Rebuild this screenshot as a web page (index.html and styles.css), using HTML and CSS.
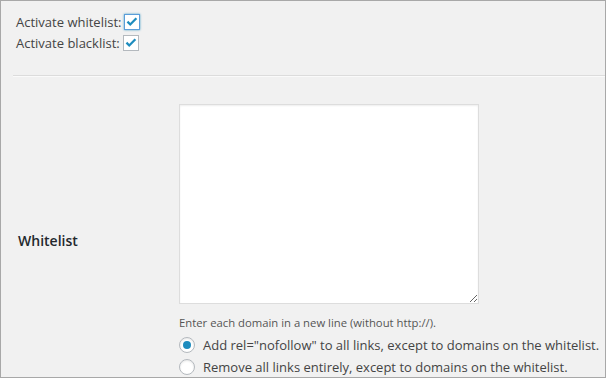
FILE: index.html
```html
<!DOCTYPE html>
<html lang="en">
<head>
    <meta charset="UTF-8">
    <title>Link settings</title>
    <link rel="stylesheet" href="styles.css">
</head>
<body>
    <div class="wrap">
        <div class="toggles">
            <div class="toggle">
                <span>Activate whitelist:</span>
                <span class="check focused">
                    <svg viewBox="0 0 16 16" width="15" height="15"><path d="M2.8 8.2l3.2 3.2L13 4.2" fill="none" stroke="#1e8cbe" stroke-width="2.6"/></svg>
                </span>
            </div>
            <div class="toggle">
                <span>Activate blacklist:</span>
                <span class="check">
                    <svg viewBox="0 0 16 16" width="15" height="15"><path d="M2.8 8.2l3.2 3.2L13 4.2" fill="none" stroke="#1e8cbe" stroke-width="2.6"/></svg>
                </span>
            </div>
        </div>

        <div class="divider"></div>

        <div class="form-row">
            <div class="row-label">Whitelist</div>
            <div class="row-field">
                <textarea class="domains"></textarea>
                <p class="description">Enter each domain in a new line (without http://).</p>
                <div class="option">
                    <span class="radio checked"></span>
                    <span>Add rel="nofollow" to all links, except to domains on the whitelist.</span>
                </div>
                <div class="option">
                    <span class="radio"></span>
                    <span>Remove all links entirely, except to domains on the whitelist.</span>
                </div>
            </div>
        </div>
    </div>
</body>
</html>
```

FILE: styles.css
```css
body {
    margin: 0;
    background-color: #fff;
    font-family: 'Open Sans', sans-serif;
}

.wrap {
    width: 604px;
    height: 376px;
    border: 1px solid #a8a8a8;
    background-color: #f1f1f1;
    color: #444;
    font-size: 13px;
    overflow: hidden;
}

.toggles {
    padding: 10px 15px 0;
}

.toggle {
    display: flex;
    align-items: center;
    gap: 3px;
    height: 21px;
    line-height: 18px;
}

.check {
    width: 14px;
    height: 14px;
    border: 1px solid #b4b9be;
    background-color: #fff;
    display: flex;
    align-items: center;
    justify-content: center;
}

.check.focused {
    border-color: #5b9dd9;
    box-shadow: 0 0 2px rgba(30, 140, 190, 0.8);
}

.divider {
    margin: 22px 0 0 12px;
    border-top: 1px solid #dcdcdc;
    border-bottom: 1px solid #fafafa;
}

.form-row {
    display: flex;
    align-items: center;
    margin-left: 12px;
    padding-top: 27px;
}

.row-label {
    width: 166px;
    padding-left: 5px;
    padding-bottom: 2px;
    box-sizing: border-box;
    color: #23282d;
    font-size: 14px;
    font-weight: 600;
}

.row-field {
    display: flex;
    flex-direction: column;
}

.domains {
    width: 300px;
    height: 200px;
    box-sizing: border-box;
    margin: 0;
    border: 1px solid #ddd;
    box-shadow: inset 0 1px 2px rgba(0, 0, 0, 0.07);
    background-color: #fff;
}

.description {
    margin: 10px 0 2px;
    font-size: 11.3px;
    line-height: 18px;
    color: #555;
}

.option {
    display: flex;
    align-items: center;
    gap: 8px;
    height: 22px;
    white-space: nowrap;
}

.radio {
    width: 14px;
    height: 14px;
    border: 1px solid #b4b9be;
    border-radius: 50%;
    background-color: #fff;
    box-shadow: inset 0 1px 2px rgba(0, 0, 0, 0.1);
    display: flex;
    align-items: center;
    justify-content: center;
    flex-shrink: 0;
}

.radio.checked::after {
    content: '';
    width: 8px;
    height: 8px;
    border-radius: 50%;
    background-color: #1e8cbe;
}
```
